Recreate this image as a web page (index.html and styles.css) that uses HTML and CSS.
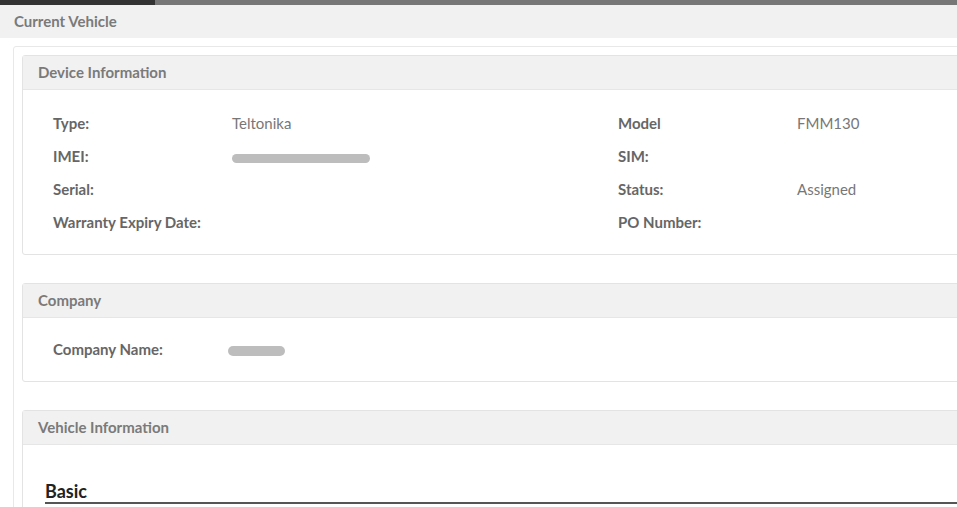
FILE: index.html
```html
<!DOCTYPE html>
<html>
<head>
<meta charset="utf-8">
<link rel="stylesheet" href="styles.css">
</head>
<body>
<div class="topbar"><div class="seg-dark"></div><div class="seg-light"></div></div>
<div class="page-head">Current Vehicle</div>
<div class="outer">
  <div class="card">
    <div class="card-head">Device Information</div>
    <div class="card-body grid4">
      <div class="lbl">Type:</div><div class="val">Teltonika</div><div class="lbl">Model</div><div class="val">FMM130</div>
      <div class="lbl">IMEI:</div><div class="val"><span class="blob blob-imei"></span></div><div class="lbl">SIM:</div><div class="val"></div>
      <div class="lbl">Serial:</div><div class="val"></div><div class="lbl">Status:</div><div class="val">Assigned</div>
      <div class="lbl">Warranty Expiry Date:</div><div class="val"></div><div class="lbl">PO Number:</div><div class="val"></div>
    </div>
  </div>
  <div class="card">
    <div class="card-head">Company</div>
    <div class="card-body grid4 company">
      <div class="lbl">Company Name:</div><div class="val"><span class="blob blob-co"></span></div>
    </div>
  </div>
  <div class="card">
    <div class="card-head">Vehicle Information</div>
    <div class="card-body vehicle">
      <h3 class="section">Basic</h3>
    </div>
  </div>
</div>
</body>
</html>
```
FILE: styles.css
```css
html, body { margin: 0; padding: 0; }
body {
  background: #fff;
  font-family: Lato, "Open Sans", sans-serif;
  font-size: 15px;
  overflow: hidden;
  width: 957px;
  height: 507px;
}
.topbar { display: flex; height: 5px; }
.seg-dark { width: 155px; background: #333; }
.seg-light { flex: 1; background: #777; }
.page-head {
  background: #f1f1f1;
  height: 33px;
  line-height: 33px;
  padding-left: 14px;
  font-weight: 700;
  color: #7a7a7a;
}
.outer {
  margin: 8px 0 0 13px;
  width: 1000px;
  border: 1px solid #e8e8e8;
  border-radius: 3px;
  padding: 8px;
}
.card {
  border: 1px solid #e3e3e3;
  border-radius: 3px;
  margin-bottom: 28px;
  background: #fff;
}
.card-head {
  background: #f1f1f1;
  height: 33px;
  line-height: 33px;
  border-bottom: 1px solid #e6e6e6;
  padding-left: 15px;
  font-weight: 700;
  color: #7a7a7a;
}
.card-body { padding: 16px 30px 16px; }
.grid4 {
  display: grid;
  grid-template-columns: 179px 386px 179px 1fr;
  grid-auto-rows: 33px;
  align-items: center;
}
.company { padding-top: 14px; padding-bottom: 16px; }
.lbl { font-weight: 700; color: #666; }
.val { color: #777; }
.blob {
  display: inline-block;
  background: #bdbdbd;
  border-radius: 6px;
  vertical-align: middle;
}
.blob-imei { width: 138px; height: 9px; margin-top: 1px; }
.blob-co { width: 57px; height: 10px; margin-left: -4px; }
.vehicle { padding: 35px 22px 0; height: 80px; }
.section {
  margin: 0;
  font-size: 18px;
  font-weight: 700;
  color: #222;
  padding-bottom: 0;
  border-bottom: 2px solid #555;
}
```
